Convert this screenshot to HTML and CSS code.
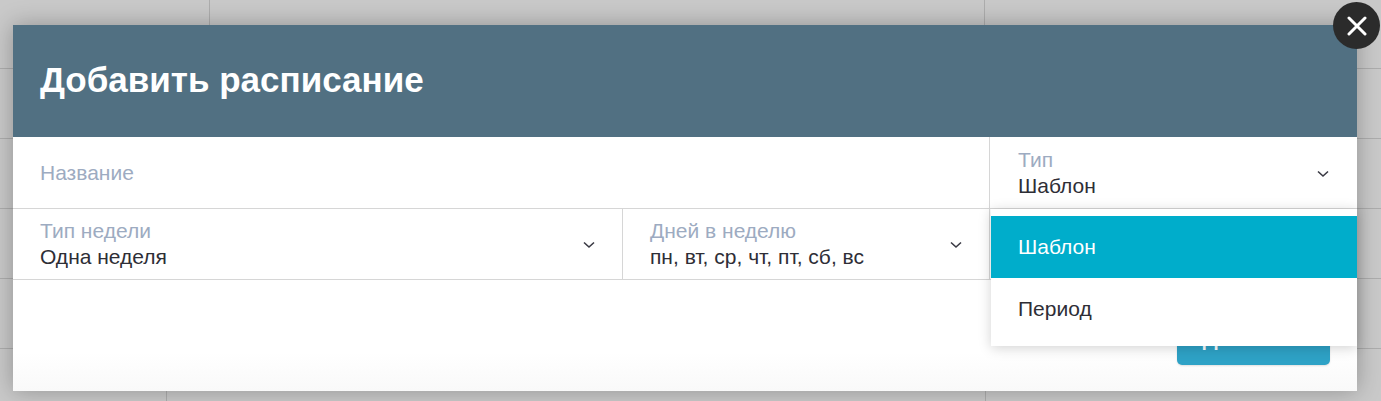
FILE: index.html
```html
<!DOCTYPE html>
<html lang="ru">
<head>
<meta charset="utf-8">
<title>Добавить расписание</title>
<link rel="stylesheet" href="styles.css">
</head>
<body>
<div class="sheet">
  <div class="sheet-row r0"><div class="cell w209"></div><div class="cell w775"></div><div class="cell grow"></div></div>
  <div class="sheet-row"><div class="cell grow"></div></div>
  <div class="sheet-row"><div class="cell grow"></div></div>
  <div class="sheet-row"><div class="cell grow"></div></div>
  <div class="sheet-row"><div class="cell grow"></div></div>
  <div class="sheet-row"><div class="cell w166"></div><div class="cell w819"></div><div class="cell grow"></div></div>
</div>

<div class="backdrop">
  <div class="modal">
    <div class="modal-header">
      <h1 class="modal-title">Добавить расписание</h1>
    </div>
    <div class="form-row row-top">
      <div class="field field-name">
        <span class="placeholder">Название</span>
      </div>
      <div class="field field-select field-type">
        <div class="field-text">
          <span class="label">Тип</span>
          <span class="value">Шаблон</span>
        </div>
        <svg class="chevron" width="12" height="8" viewBox="0 0 12 8"><path d="M1 1.5 L6 6 L11 1.5" fill="none" stroke="#3a3a44" stroke-width="1.6"/></svg>
      </div>
    </div>
    <div class="form-row row-bottom">
      <div class="field field-select field-week">
        <div class="field-text">
          <span class="label">Тип недели</span>
          <span class="value">Одна неделя</span>
        </div>
        <svg class="chevron" width="12" height="8" viewBox="0 0 12 8"><path d="M1 1.5 L6 6 L11 1.5" fill="none" stroke="#3a3a44" stroke-width="1.6"/></svg>
      </div>
      <div class="field field-select field-days">
        <div class="field-text">
          <span class="label">Дней в неделю</span>
          <span class="value">пн, вт, ср, чт, пт, сб, вс</span>
        </div>
        <svg class="chevron" width="12" height="8" viewBox="0 0 12 8"><path d="M1 1.5 L6 6 L11 1.5" fill="none" stroke="#3a3a44" stroke-width="1.6"/></svg>
      </div>
      <div class="field field-empty"></div>
    </div>
    <div class="modal-footer">
      <button class="btn-primary" type="button">Добавить</button>
    </div>

    <ul class="dropdown">
      <li class="option selected">Шаблон</li>
      <li class="option">Период</li>
    </ul>
  </div>
  <button class="close-btn" type="button" aria-label="Закрыть">
    <svg width="20" height="20" viewBox="0 0 20 20"><path d="M2 2 L18 18 M18 2 L2 18" stroke="#fff" stroke-width="3" stroke-linecap="round"/></svg>
  </button>
</div>
</body>
</html>
```

FILE: styles.css
```css
html, body {
  margin: 0;
  padding: 0;
  width: 1381px;
  height: 401px;
  overflow: hidden;
  font-family: "Liberation Sans", Arial, sans-serif;
}

/* underlying table, dimmed by the backdrop */
.sheet {
  display: flex;
  flex-direction: column;
  background: #c9c9c9;
  margin-top: -1px;
}
.sheet-row {
  display: flex;
  height: 69px;
  border-bottom: 1px solid #adadad;
}
.cell {
  height: 100%;
  border-right: 1px solid #adadad;
  box-sizing: border-box;
}
.cell.grow { flex: 1; border-right: none; }
.w209 { width: 210px; }
.w775 { width: 775px; }
.w166 { width: 167px; }
.w819 { width: 819px; }

.backdrop {
  position: absolute;
  inset: 0;
}

.modal {
  position: absolute;
  left: 13px;
  top: 25px;
  width: 1344px;
  height: 366px;
  background: #fff;
  box-shadow: 0 0 22px rgba(0, 0, 0, 0.28);
  display: flex;
  flex-direction: column;
}

.modal-header {
  height: 112px;
  background: #517082;
  display: flex;
  align-items: center;
  padding-left: 27px;
  flex-shrink: 0;
}
.modal-title {
  margin: 0;
  color: #fff;
  font-size: 35px;
  font-weight: bold;
  position: relative;
  top: -1px;
}

.form-row {
  display: flex;
  box-sizing: border-box;
  border-bottom: 1px solid #d6d6d6;
  flex-shrink: 0;
}
.row-top { height: 72px; }
.row-bottom { height: 71px; }

.field {
  box-sizing: border-box;
  padding: 0 27px;
  display: flex;
  align-items: center;
  font-size: 21px;
}
.field-name { width: 977px; border-right: 1px solid #d6d6d6; }
.field-type { flex: 1; }
.field-week { width: 610px; border-right: 1px solid #d6d6d6; }
.field-days { width: 367px; border-right: 1px solid #d6d6d6; }
.field-empty { flex: 1; }

.field-select { justify-content: space-between; padding-right: 27px; }
.field-type { padding-right: 28px; padding-left: 28px; }

.field-text {
  display: flex;
  flex-direction: column;
}
.placeholder, .label {
  color: #9dabc1;
  line-height: 26px;
}
.value {
  color: #2e2e36;
  line-height: 26px;
}
.chevron { flex-shrink: 0; margin-top: 2px; }

.modal-footer {
  flex: 1;
  display: flex;
  justify-content: flex-end;
  align-items: flex-end;
  padding: 0 27px 26px 0;
  background: linear-gradient(#fff 65%, #f9f9f9);
}
.btn-primary {
  width: 153px;
  height: 52px;
  border: none;
  border-radius: 5px;
  background: #2ea2c6;
  color: #fff;
  font-family: "Liberation Sans", Arial, sans-serif;
  font-size: 21px;
  font-weight: bold;
  box-shadow: 0 1px 2px rgba(0, 0, 0, 0.12);
}

/* open options list of the "Тип" select */
.dropdown {
  position: absolute;
  left: 978px;
  top: 184px;
  width: 366px;
  margin: 0;
  padding: 7px 0 6px;
  list-style: none;
  background: #fff;
  box-shadow: 0 2px 12px rgba(0, 0, 0, 0.18);
}
.option {
  height: 62px;
  display: flex;
  align-items: center;
  padding-left: 27px;
  font-size: 21px;
  color: #2e2e36;
}
.option.selected {
  background: #00adcb;
  color: #fff;
}

.close-btn {
  position: absolute;
  left: 1333px;
  top: 2px;
  width: 47px;
  height: 47px;
  border-radius: 50%;
  border: none;
  padding: 0;
  background: #2b2b2b;
  display: flex;
  align-items: center;
  justify-content: center;
}
```
